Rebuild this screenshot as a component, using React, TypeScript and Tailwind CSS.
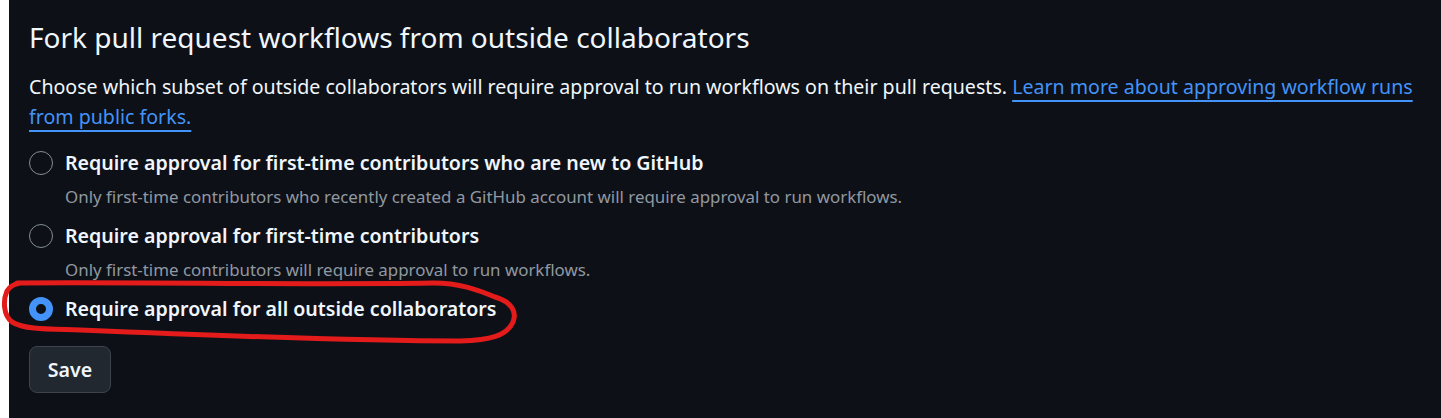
const options = [
  {
    title: 'Require approval for first-time contributors who are new to GitHub',
    desc: 'Only first-time contributors who recently created a GitHub account will require approval to run workflows.',
  },
  {
    title: 'Require approval for first-time contributors',
    desc: 'Only first-time contributors will require approval to run workflows.',
  },
  {
    title: 'Require approval for all outside collaborators',
    desc: '',
    checked: true,
  },
]

function Radio({ checked }: { checked?: boolean }) {
  if (checked) {
    return <span className="block w-[24px] h-[24px] rounded-full border-[7px] border-[#4493f8] bg-[#0d1117] shrink-0" />
  }
  return <span className="block w-[24px] h-[24px] rounded-full border border-[#848d97] shrink-0" />
}

export default function App() {
  return (
    <div className="relative flex w-[1441px] h-[418px] bg-white" style={{ fontFamily: '"Segoe UI", "Noto Sans", sans-serif' }}>
      <div className="w-[9px] shrink-0" />
      <div className="flex-1 bg-[#0d1117] pl-[20px] pr-[20px] pt-[17px] text-[#f0f6fc]">
        <h2 className="text-[28px] leading-[40px] font-normal">Fork pull request workflows from outside collaborators</h2>
        <p className="mt-[15px] text-[19.6px] leading-[30px] max-w-[1395px]">
          Choose which subset of outside collaborators will require approval to run workflows on their pull requests.{' '}
          <a href="#" className="text-[#4493f8] underline underline-offset-[6px] decoration-2">
            Learn more about approving workflow runs from public forks.
          </a>
        </p>

        <div className="mt-[16px] flex flex-col gap-[11px]">
          {options.map(o => (
            <label key={o.title} className="flex gap-[12px]">
              <span className="pt-[3px]">
                <Radio checked={o.checked} />
              </span>
              <span className="flex flex-col">
                <span className="text-[19.6px] leading-[30px] font-semibold">{o.title}</span>
                {o.desc && <span className="mt-[6px] text-[16.9px] leading-[26px] text-[#9198a1]">{o.desc}</span>}
              </span>
            </label>
          ))}
        </div>

        <button className="mt-[22px] h-[47px] w-[82px] rounded-[8px] border border-[#3d444d] bg-[#212830] text-[19.6px] font-semibold text-[#f0f6fc]">
          Save
        </button>
      </div>

      <svg className="absolute left-0 top-0 pointer-events-none" width="1441" height="418" viewBox="0 0 1441 418" fill="none">
        <path
          d="M 17 283 C 150 282, 300 285, 433 283 C 460 283, 478 290, 495 297 C 512 302, 517 312, 513 322 C 507 336, 490 340, 460 341 C 350 341, 200 335, 80 330 C 50 329, 25 330, 12 322 C 3 315, 3 300, 7 291 C 10 286, 14 284, 20 283"
          stroke="#e31b1b"
          strokeWidth="5"
          strokeLinecap="round"
          strokeLinejoin="round"
        />
      </svg>
    </div>
  )
}
